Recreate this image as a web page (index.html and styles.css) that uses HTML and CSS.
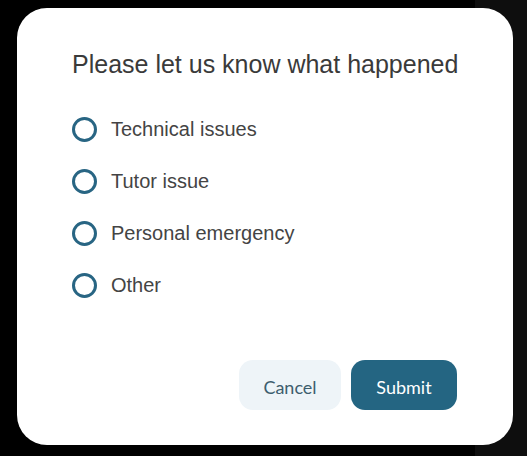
FILE: index.html
```html
<!DOCTYPE html>
<html lang="en">
<head>
<meta charset="UTF-8">
<title>Cancellation reason</title>
<link rel="stylesheet" href="styles.css">
</head>
<body>
    <div class="dialog">
        <h2 class="title">Please let us know what happened</h2>
        <ul class="options">
            <li><label><input type="radio" name="reason"><span class="dot"></span>Technical issues</label></li>
            <li><label><input type="radio" name="reason"><span class="dot"></span>Tutor issue</label></li>
            <li><label><input type="radio" name="reason"><span class="dot"></span>Personal emergency</label></li>
            <li><label><input type="radio" name="reason"><span class="dot"></span>Other</label></li>
        </ul>
        <div class="actions">
            <button class="btn btn-cancel">Cancel</button>
            <button class="btn btn-submit">Submit</button>
        </div>
    </div>
</body>
</html>
```

FILE: styles.css
```css
* {
    margin: 0;
    padding: 0;
    box-sizing: border-box;
}
html, body {
    height: 100%;
}
body {
    background: linear-gradient(to right, #000 475px, #0e0e0e 475px);
    font-family: "Liberation Sans", Arial, sans-serif;
    padding: 8px 0 0 17px;
}
.dialog {
    width: 496px;
    height: 437px;
    background: #fff;
    border-radius: 30px;
    padding: 40px 56px 35px 55px;
    display: flex;
    flex-direction: column;
}
.title {
    font-size: 25px;
    font-weight: 400;
    line-height: 32px;
    color: #3a3a3a;
    white-space: nowrap;
}
.options {
    list-style: none;
    margin-top: 36px;
}
.options li {
    height: 52px;
}
.options label {
    display: flex;
    align-items: center;
    height: 26px;
    font-size: 20px;
    color: #444;
    cursor: pointer;
}
.options input {
    display: none;
}
.dot {
    width: 25px;
    height: 25px;
    border: 3px solid #286583;
    border-radius: 50%;
    margin-right: 14px;
}
.actions {
    margin-top: auto;
    display: flex;
    justify-content: flex-end;
    gap: 10px;
}
.btn {
    height: 50px;
    padding-top: 3px;
    border: none;
    border-radius: 14px;
    font-family: Lato, "Open Sans", sans-serif;
    font-size: 18px;
}
.btn-cancel {
    width: 102px;
    background: #eef4f8;
    color: #3d5d6e;
}
.btn-submit {
    width: 106px;
    background: #246582;
    color: #fff;
}
```
